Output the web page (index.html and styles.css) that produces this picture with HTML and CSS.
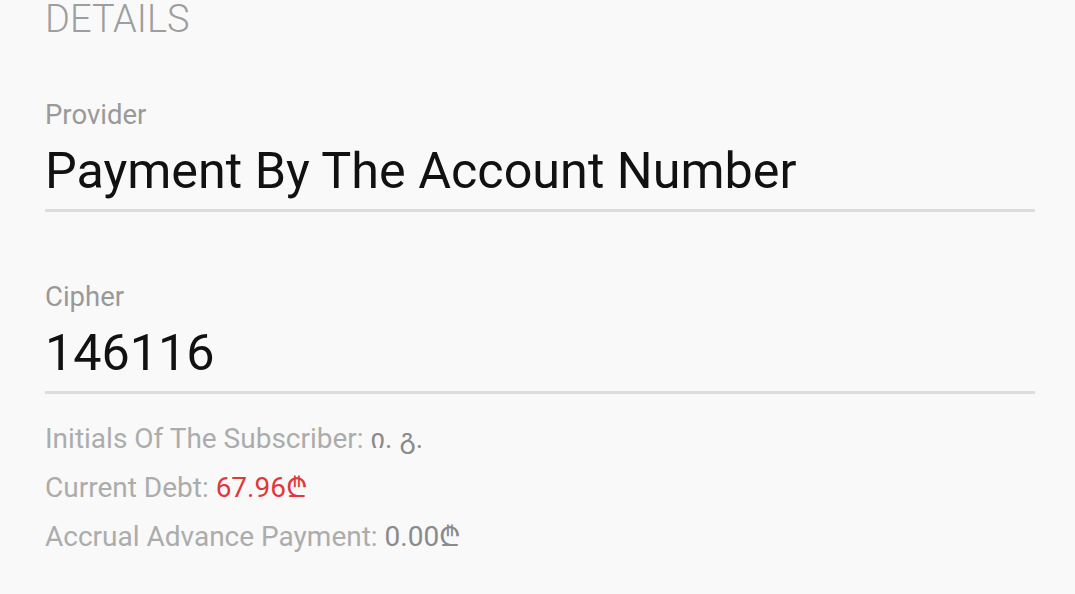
FILE: index.html
```html
<!DOCTYPE html>
<html lang="en">
<head>
  <meta charset="UTF-8" />
  <meta name="viewport" content="width=device-width, initial-scale=1.0" />
  <title>Details</title>
  <link rel="stylesheet" href="styles.css">
</head>
<body>
  <div class="details">
    <h2 class="section-title">DETAILS</h2>

    <div class="field">
      <div class="field-label">Provider</div>
      <div class="field-value">Payment By The Account Number</div>
    </div>

    <div class="field">
      <div class="field-label">Cipher</div>
      <div class="field-value">146116</div>
    </div>

    <div class="info">
      <div class="info-row">Initials Of The Subscriber: <span class="info-value">ი. გ.</span></div>
      <div class="info-row">Current Debt: <span class="info-value debt">67.96₾</span></div>
      <div class="info-row">Accrual Advance Payment: <span class="info-value">0.00₾</span></div>
    </div>
  </div>
</body>
</html>
```

FILE: styles.css
```css
body {
  font-family: Roboto, "DejaVu Sans", sans-serif;
  background: #f9f9f9;
  color: #111;
  margin: 0;
  padding: 0;
}

.details {
  padding: 0 40px 0 45px;
}

.section-title {
  margin: 0 0 61px;
  font-size: 38px;
  line-height: 38px;
  font-weight: 300;
  color: #9e9e9e;
}

.field {
  padding-bottom: 10px;
  border-bottom: 3px solid #dcdcdc;
}

.field + .field {
  margin-top: 69px;
}

.field-label {
  font-size: 27.5px;
  line-height: 32px;
  color: #999;
}

.field-value {
  margin-top: 12px;
  font-size: 50.3px;
  line-height: 56px;
  color: #111;
}

.info {
  margin-top: 20px;
}

.info-row {
  font-size: 28px;
  line-height: 49px;
  color: #acacac;
}

.info-value {
  color: #8a8a8a;
}

.info-value.debt {
  color: #e0393b;
}
```
